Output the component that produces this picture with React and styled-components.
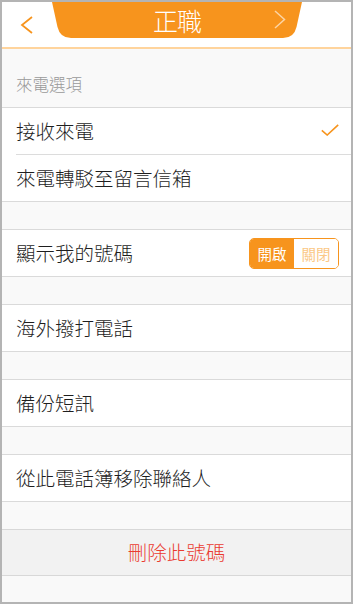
import styled, { createGlobalStyle } from 'styled-components';

const GlobalStyle = createGlobalStyle`
  html, body {
    margin: 0;
    padding: 0;
    background: #b4b4b4;
  }
  body {
    font-family: "Noto Sans CJK TC", "Noto Sans", sans-serif;
    font-weight: 300;
  }
`;

const ORANGE = '#f7941d';

const Screen = styled.div`
  margin: 2px;
  width: 349px;
  height: 600px;
  background: #f9f9f9;
  overflow: hidden;
  display: flex;
  flex-direction: column;
`;

const Header = styled.header`
  height: 45px;
  flex-shrink: 0;
  background: #fff;
  border-bottom: 2px solid #ffd49c;
  display: grid;
  grid-template-columns: 50px 250px 1fr;
  align-items: start;
`;

const BackButton = styled.button`
  height: 45px;
  border: none;
  background: none;
  padding: 0;
  display: flex;
  align-items: center;
  justify-content: center;
  cursor: pointer;
`;

const Tab = styled.div`
  position: relative;
  height: 36px;
  display: flex;
  align-items: center;
  justify-content: center;
`;

const TabShape = styled.svg`
  position: absolute;
  inset: 0;
`;

const Title = styled.h1`
  position: relative;
  margin: 0;
  color: #fff;
  font-size: 25px;
  font-weight: 300;
  line-height: 36px;
  letter-spacing: -1px;
`;

const NextArrow = styled.svg`
  position: absolute;
  right: 16px;
  top: 8px;
`;

const SectionTitle = styled.div`
  height: 58px;
  flex-shrink: 0;
  box-sizing: border-box;
  display: flex;
  align-items: flex-end;
  padding: 0 0 11px 14px;
  color: #9a9a9a;
  font-size: 16.5px;
  line-height: 24px;
`;

const Group = styled.div`
  flex-shrink: 0;
  background: #fff;
  border-top: 1px solid #dadada;
  border-bottom: 1px solid #dadada;
`;

const Row = styled.div`
  box-sizing: border-box;
  display: flex;
  align-items: center;
  justify-content: space-between;
  margin-left: 14px;
  padding-right: 12px;
  padding-bottom: 2px;
  color: #1e1e1e;
  font-size: 19.5px;
  border-top: ${(props) => (props.divided ? '1px solid #dcdcdc' : 'none')};
  height: ${(props) => (props.divided ? '47px' : '46px')};
`;

const Gap = styled.div`
  height: 27px;
  flex-shrink: 0;
`;

const Toggle = styled.div`
  display: flex;
  width: 90px;
  height: 31px;
  margin-top: 2px;
  box-sizing: border-box;
  border: 1px solid ${ORANGE};
  border-radius: 5px;
  overflow: hidden;
`;

const ToggleOption = styled.span`
  flex: 1;
  display: flex;
  align-items: center;
  justify-content: center;
  font-size: 14.5px;
  font-weight: 400;
  background: ${(props) => (props.active ? ORANGE : '#fff')};
  color: ${(props) => (props.active ? '#fff' : '#fbc886')};
`;

const DeleteRow = styled.button`
  flex-shrink: 0;
  height: 47px;
  padding: 0 0 2px;
  border: none;
  border-top: 1px solid #d8d8d8;
  border-bottom: 1px solid #d8d8d8;
  background: #f2f2f2;
  color: #ea3b30;
  font-family: inherit;
  font-weight: 300;
  font-size: 19.5px;
  cursor: pointer;
`;

function Check() {
  return (
    <svg width='18' height='12' viewBox='0 0 18 12'>
      <polyline
        points='0.8,6.3 6.2,11 17.2,0.8'
        fill='none'
        stroke={ORANGE}
        strokeWidth='1.6'
      />
    </svg>
  );
}

export default function App() {
  return (
    <>
      <GlobalStyle />
      <Screen>
        <Header>
          <BackButton aria-label='back'>
            <svg width='14' height='20' viewBox='0 0 14 20'>
              <polyline
                points='12,2 2,10 12,18'
                fill='none'
                stroke={ORANGE}
                strokeWidth='1.8'
              />
            </svg>
          </BackButton>
          <Tab>
            <TabShape width='250' height='36' viewBox='0 0 250 36'>
              <path
                d='M0 0 H250 L244.5 25 Q242 36 231 36 H19 Q8 36 5.5 25 Z'
                fill={ORANGE}
              />
            </TabShape>
            <Title>正職</Title>
            <NextArrow width='12' height='19' viewBox='0 0 12 19'>
              <polyline
                points='1,1 10.5,9.5 1,18'
                fill='none'
                stroke='rgba(255,255,255,0.6)'
                strokeWidth='1.5'
              />
            </NextArrow>
          </Tab>
        </Header>

        <SectionTitle>來電選項</SectionTitle>
        <Group>
          <Row>
            接收來電
            <Check />
          </Row>
          <Row divided>來電轉駁至留言信箱</Row>
        </Group>

        <Gap />
        <Group>
          <Row>
            顯示我的號碼
            <Toggle>
              <ToggleOption active>開啟</ToggleOption>
              <ToggleOption>關閉</ToggleOption>
            </Toggle>
          </Row>
        </Group>

        <Gap />
        <Group>
          <Row>海外撥打電話</Row>
        </Group>

        <Gap />
        <Group>
          <Row>備份短訊</Row>
        </Group>

        <Gap />
        <Group>
          <Row>從此電話簿移除聯絡人</Row>
        </Group>

        <Gap />
        <DeleteRow>刪除此號碼</DeleteRow>
      </Screen>
    </>
  );
}
